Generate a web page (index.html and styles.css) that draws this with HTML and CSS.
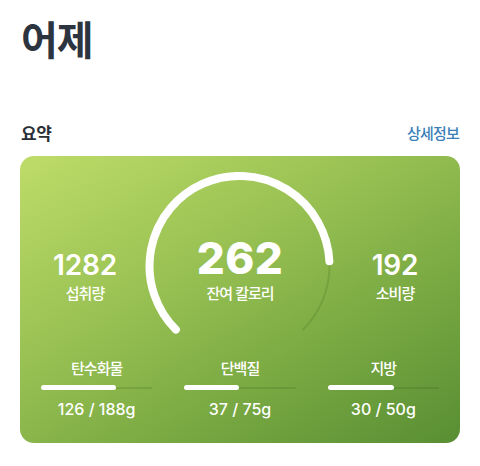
FILE: index.html
```html
<!DOCTYPE html>
<html lang="ko">
<head>
<meta charset="utf-8">
<link rel="stylesheet" href="styles.css">
</head>
<body>
  <h1 class="title">어제</h1>
  <div class="section-head">
    <h2 class="section-title">요약</h2>
    <a class="more" href="#">상세정보</a>
  </div>
  <div class="card">
    <div class="top">
      <div class="stat">
        <div class="stat-num">1282</div>
        <div class="stat-label">섭취량</div>
      </div>
      <div class="gauge">
        <svg class="gauge-svg" width="221" height="163" viewBox="0 0 221 163">
          <path d="M 46.9 157.6 A 90 90 0 1 1 174.1 157.6" fill="none" stroke="rgba(40,80,10,0.16)" stroke-width="2" stroke-linecap="round"/>
          <path d="M 46.9 157.6 A 90 90 0 1 1 200.4 89.3" fill="none" stroke="#ffffff" stroke-width="8" stroke-linecap="round"/>
        </svg>
        <div class="gauge-num">262</div>
        <div class="gauge-label">잔여 칼로리</div>
      </div>
      <div class="stat">
        <div class="stat-num">192</div>
        <div class="stat-label">소비량</div>
      </div>
    </div>
    <div class="macros">
      <div class="macro">
        <div class="macro-label">탄수화물</div>
        <div class="bar"><div class="bar-fill" style="width:67%"></div></div>
        <div class="macro-value">126 / 188g</div>
      </div>
      <div class="macro">
        <div class="macro-label">단백질</div>
        <div class="bar"><div class="bar-fill" style="width:49%"></div></div>
        <div class="macro-value">37 / 75g</div>
      </div>
      <div class="macro">
        <div class="macro-label">지방</div>
        <div class="bar"><div class="bar-fill" style="width:60%"></div></div>
        <div class="macro-value">30 / 50g</div>
      </div>
    </div>
  </div>
</body>
</html>
```
FILE: styles.css
```css
* { box-sizing: border-box; }
html, body { margin: 0; padding: 0; background: #ffffff; }
body {
  width: 480px;
  height: 466px;
  overflow: hidden;
  font-family: Inter, "Noto Sans CJK KR", sans-serif;
  padding: 0 20px;
}
.title {
  margin: 14px 0 0 1px;
  font-family: "Noto Sans CJK KR", sans-serif;
  font-size: 40px;
  line-height: 48px;
  font-weight: 700;
  color: #2c3440;
  letter-spacing: -1px;
}
.section-head {
  display: flex;
  justify-content: space-between;
  align-items: center;
  margin-top: 58px;
  height: 24px;
}
.section-title {
  margin: 0 0 0 1px;
  font-family: "Noto Sans CJK KR", sans-serif;
  font-size: 17px;
  font-weight: 700;
  color: #2a2f36;
  letter-spacing: -0.5px;
}
.more {
  font-family: "Noto Sans CJK KR", sans-serif;
  font-size: 15px;
  font-weight: 500;
  color: #3b7fb8;
  text-decoration: none;
  letter-spacing: -0.8px;
  margin-right: 1px;
}
.card {
  margin-top: 12px;
  height: 287px;
  border-radius: 14px;
  background: linear-gradient(150deg, #bedc69 0%, #97c052 40%, #77a741 70%, #588e33 100%);
  color: #ffffff;
  padding: 16px 21px 0;
}
.top {
  display: grid;
  grid-template-columns: 88px 1fr 88px;
  height: 163px;
}
.stat {
  display: flex;
  flex-direction: column;
  align-items: center;
  padding-top: 79px;
}
.stat-num {
  font-size: 28px;
  line-height: 28px;
  font-weight: 600;
  letter-spacing: -0.2px;
}
.stat-label {
  margin-top: 4px;
  font-family: "Noto Sans CJK KR", sans-serif;
  font-size: 15px;
  font-weight: 500;
  line-height: 20px;
  letter-spacing: -1px;
}
.gauge {
  position: relative;
  display: flex;
  flex-direction: column;
  align-items: center;
  padding-top: 64px;
}
.gauge-svg {
  position: absolute;
  left: 0;
  top: 0;
}
.gauge-num {
  position: relative;
  font-size: 44px;
  line-height: 40px;
  font-weight: 800;
  letter-spacing: 0.5px;
  margin-top: 2px;
}
.gauge-label {
  position: relative;
  margin-top: 5px;
  font-family: "Noto Sans CJK KR", sans-serif;
  font-size: 15px;
  font-weight: 500;
  line-height: 20px;
  letter-spacing: -1px;
}
.macros {
  display: grid;
  grid-template-columns: 1fr 1fr 1fr;
  column-gap: 32px;
  margin-top: 23px;
}
.macro {
  display: flex;
  flex-direction: column;
  align-items: center;
}
.macro-label {
  font-family: "Noto Sans CJK KR", sans-serif;
  font-size: 15px;
  font-weight: 500;
  line-height: 20px;
  letter-spacing: -1px;
}
.bar {
  position: relative;
  width: 100%;
  height: 5px;
  margin-top: 7px;
  display: flex;
  align-items: center;
  background: linear-gradient(rgba(40,80,10,0.16), rgba(40,80,10,0.16)) center / 100% 2px no-repeat;
}
.bar-fill {
  height: 5px;
  border-radius: 3px;
  background: #ffffff;
}
.macro-value {
  margin-top: 9px;
  font-size: 16px;
  line-height: 20px;
  font-weight: 500;
}
```
